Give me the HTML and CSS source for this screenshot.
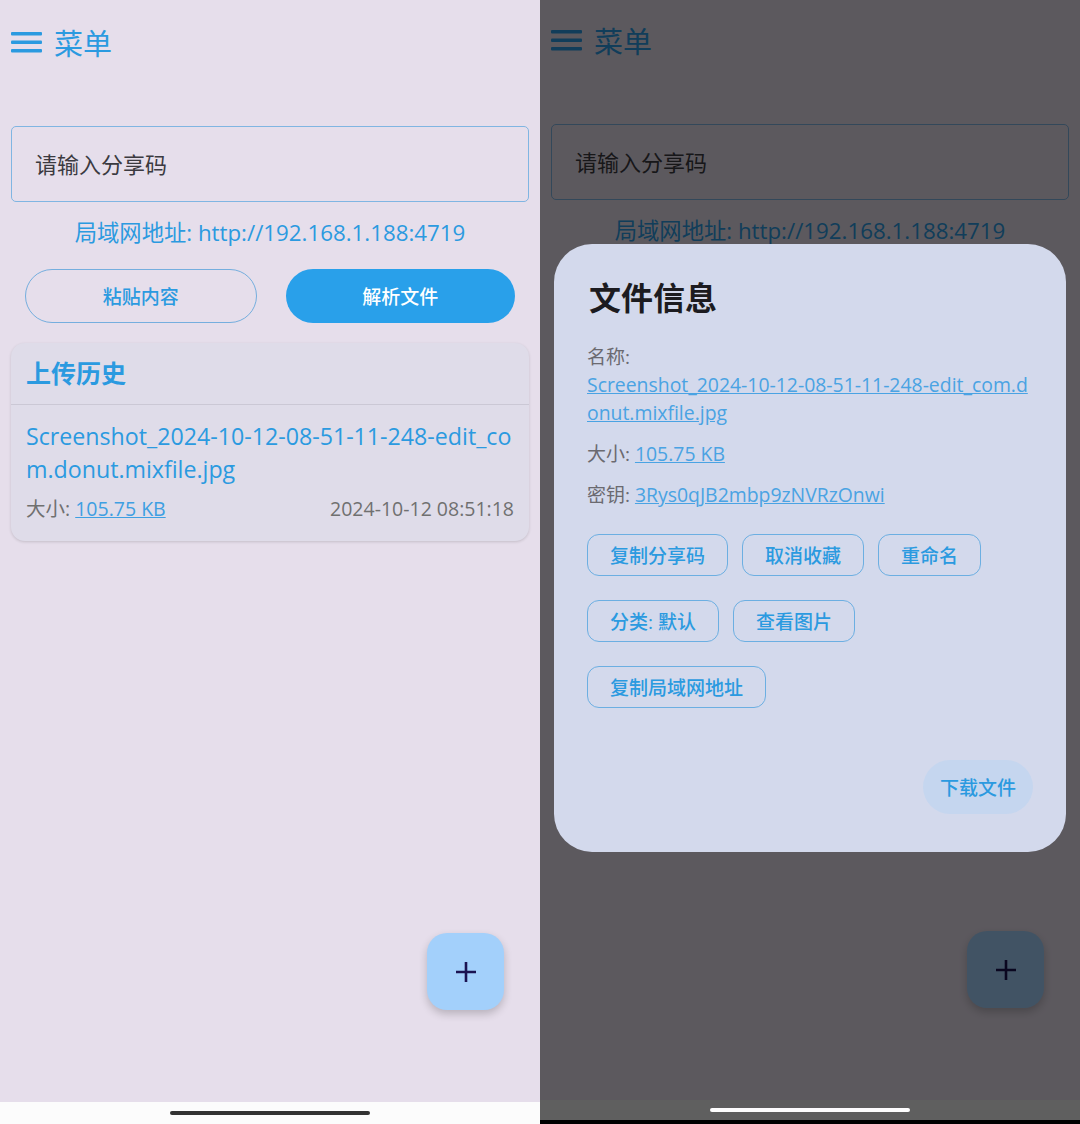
FILE: index.html
```html
<!DOCTYPE html>
<html lang="zh-CN">
  <head>
    <meta charset="UTF-8" />
    <meta name="viewport" content="width=device-width, initial-scale=1.0" />
    <title>MixFile</title>
    <link rel="stylesheet" href="styles.css">
  </head>
  <body>
    <!-- Home screen -->
    <div class="screen">
      <div class="app">
        <div class="topbar">
          <svg class="menu-icon" width="31" height="21" viewBox="0 0 31 21">
            <rect x="0" y="0" width="31" height="3.5" rx="1" />
            <rect x="0" y="8.5" width="31" height="3.5" rx="1" />
            <rect x="0" y="17" width="31" height="3.5" rx="1" />
          </svg>
          <span>菜单</span>
        </div>

        <div class="code-input">请输入分享码</div>
        <div class="lan">局域网地址: http://192.168.1.188:4719</div>

        <div class="actions">
          <div class="btn-pill btn-outline">粘贴内容</div>
          <div class="btn-pill btn-filled">解析文件</div>
        </div>

        <div class="history">
          <div class="history-head">上传历史</div>
          <div class="history-item">
            <div class="file-name">Screenshot_2024-10-12-08-51-11-248-edit_com.donut.mixfile.jpg</div>
            <div class="file-meta">
              <span>大小: <a href="#">105.75 KB</a></span>
              <span>2024-10-12 08:51:18</span>
            </div>
          </div>
        </div>
      </div>

      <div class="fab">
        <svg width="22" height="22" viewBox="0 0 22 22"><path d="M11 1v20M1 11h20" /></svg>
      </div>

      <div class="navbar"><div class="handle"></div></div>
    </div>

    <!-- Same screen with the file dialog open -->
    <div class="screen dimmed">
      <div class="app">
        <div class="topbar">
          <svg class="menu-icon" width="31" height="21" viewBox="0 0 31 21">
            <rect x="0" y="0" width="31" height="3.5" rx="1" />
            <rect x="0" y="8.5" width="31" height="3.5" rx="1" />
            <rect x="0" y="17" width="31" height="3.5" rx="1" />
          </svg>
          <span>菜单</span>
        </div>

        <div class="code-input">请输入分享码</div>
        <div class="lan">局域网地址: http://192.168.1.188:4719</div>

        <!-- covered by the dialog -->
        <div class="actions">
          <div class="btn-pill btn-outline">粘贴内容</div>
          <div class="btn-pill btn-filled">解析文件</div>
        </div>

        <div class="history">
          <div class="history-head">上传历史</div>
          <div class="history-item">
            <div class="file-name">Screenshot_2024-10-12-08-51-11-248-edit_com.donut.mixfile.jpg</div>
            <div class="file-meta">
              <span>大小: <a href="#">105.75 KB</a></span>
              <span>2024-10-12 08:51:18</span>
            </div>
          </div>
        </div>
      </div>

      <div class="fab">
        <svg width="22" height="22" viewBox="0 0 22 22"><path d="M11 1v20M1 11h20" /></svg>
      </div>

      <div class="scrim"></div>

      <div class="dialog">
        <div class="dialog-title">文件信息</div>
        <div class="field-label">名称:</div>
        <a class="field-link" href="#">Screenshot_2024-10-12-08-51-11-248-edit_com.donut.mixfile.jpg</a>
        <div class="field">大小: <a href="#">105.75 KB</a></div>
        <div class="field">密钥: <a href="#">3Rys0qJB2mbp9zNVRzOnwi</a></div>

        <div class="chips">
          <div class="chip-row">
            <div class="chip">复制分享码</div>
            <div class="chip">取消收藏</div>
            <div class="chip">重命名</div>
          </div>
          <div class="chip-row">
            <div class="chip">分类: 默认</div>
            <div class="chip">查看图片</div>
          </div>
          <div class="chip-row">
            <div class="chip">复制局域网地址</div>
          </div>
        </div>

        <div class="dialog-footer">
          <div class="btn-tonal">下载文件</div>
        </div>
      </div>

      <div class="navbar"><div class="handle"></div></div>
      <div class="strip"></div>
    </div>
  </body>
</html>
```

FILE: styles.css
```css
/* Resets */
* {
  box-sizing: border-box;
}
body {
  margin: 0;
  display: flex;
  background: #000;
  font-family: "Open Sans", "Noto Sans CJK SC", sans-serif;
}
a {
  color: #3e9fe2;
}

/* Screen */
.screen {
  position: relative;
  width: 540px;
  height: 1124px;
  overflow: hidden;
  display: flex;
  flex-direction: column;
  background: #e6deeb;
}
.app {
  flex: 1;
  padding: 26px 11px 0;
}

/* Top bar */
.topbar {
  display: flex;
  align-items: center;
  gap: 12px;
  height: 32px;
  font-size: 29px;
  color: #2b9ae0;
}
.menu-icon {
  fill: #2b9ae0;
}

/* Share code */
.code-input {
  margin-top: 68px;
  height: 76px;
  display: flex;
  align-items: center;
  padding: 0 0 3px 23px;
  border: 1.5px solid #80b5e2;
  border-radius: 5px;
  font-size: 22px;
  color: #3b3a40;
}
.lan {
  margin-top: 16px;
  text-align: center;
  font-size: 22.3px;
  line-height: 30px;
  color: #2b9ae0;
}

/* Buttons */
.actions {
  display: flex;
  gap: 29px;
  margin-top: 21px;
  padding: 0 14px;
}
.btn-pill {
  flex: 1;
  height: 54px;
  display: flex;
  align-items: center;
  justify-content: center;
  border-radius: 27px;
  font-size: 19px;
  font-weight: 500;
}
.btn-outline {
  border: 1.5px solid #75aede;
  color: #2b9ae0;
}
.btn-filled {
  background: #29a0ea;
  color: #fff;
}

/* History card */
.history {
  margin-top: 20px;
  background: #dfdce9;
  border-radius: 14px;
  box-shadow: 0 1px 3px rgba(0, 0, 0, 0.15);
}
.history-head {
  height: 62px;
  display: flex;
  align-items: center;
  padding: 0 0 3px 15px;
  border-bottom: 1px solid #cbc8d5;
  font-size: 25px;
  font-weight: 700;
  color: #2b9ae0;
}
.history-item {
  padding: 15px 13px 19px 15px;
}
.file-name {
  font-size: 23.2px;
  line-height: 33px;
  color: #2b9ae0;
  word-break: break-all;
}
.file-meta {
  display: flex;
  justify-content: space-between;
  margin-top: 10px;
  padding-right: 2px;
  font-size: 19.5px;
  line-height: 26px;
  color: #707070;
}

/* FAB */
.fab {
  position: absolute;
  right: 36px;
  bottom: 114px;
  width: 77px;
  height: 77px;
  display: flex;
  align-items: center;
  justify-content: center;
  border-radius: 20px;
  background: #a3d0fb;
  box-shadow: 0 4px 8px rgba(0, 0, 0, 0.2);
}
.fab path {
  stroke: #1b1352;
  stroke-width: 2.6;
  fill: none;
}

/* System nav */
.navbar {
  height: 22px;
  display: flex;
  align-items: center;
  justify-content: center;
  background: #fcfcfc;
}
.handle {
  width: 200px;
  height: 4px;
  border-radius: 2px;
  background: #333;
}

/* Dimmed screen */
.dimmed .app {
  margin-top: -2px;
}
.dimmed .actions,
.dimmed .history {
  visibility: hidden;
}
.dimmed .fab {
  bottom: 116px;
}
.dimmed .navbar {
  position: relative;
  z-index: 2;
  height: 20px;
  background: #5f5f5f;
}
.dimmed .handle {
  background: #fff;
}
.strip {
  height: 4px;
  background: #000;
}
.scrim {
  position: absolute;
  inset: 0;
  z-index: 1;
  background: rgba(0, 0, 0, 0.6);
}

/* Dialog */
.dialog {
  position: absolute;
  left: 14px;
  top: 244px;
  z-index: 3;
  width: 512px;
  padding: 34px 33px 38px 33px;
  border-radius: 38px;
  background: #d3d9ec;
}
.dialog-title {
  padding-left: 2px;
  font-size: 32px;
  line-height: 40px;
  font-weight: 700;
  color: #1c1b20;
}
.field-label,
.field {
  font-size: 19px;
  line-height: 28px;
  color: #6b6a70;
}
.field-label {
  margin-top: 25px;
}
.field {
  margin-top: 13px;
}
.field a,
.field-link {
  font-size: 19.4px;
  color: #4aa3e3;
}
.field-link {
  display: block;
  line-height: 28px;
  word-break: break-all;
}

/* Dialog chips */
.chips {
  display: flex;
  flex-direction: column;
  gap: 24px;
  margin-top: 25px;
}
.chip-row {
  display: flex;
  gap: 14px;
}
.chip {
  height: 42px;
  display: flex;
  align-items: center;
  padding: 0 22px;
  border: 1.5px solid #6cafe2;
  border-radius: 12px;
  font-size: 19px;
  font-weight: 500;
  color: #2b9ae0;
}
.dialog-footer {
  display: flex;
  justify-content: flex-end;
  margin-top: 52px;
}
.btn-tonal {
  height: 54px;
  display: flex;
  align-items: center;
  padding: 0 17px;
  border-radius: 27px;
  background: #c5d6ef;
  font-size: 19px;
  font-weight: 500;
  color: #2b9ae0;
}
```
